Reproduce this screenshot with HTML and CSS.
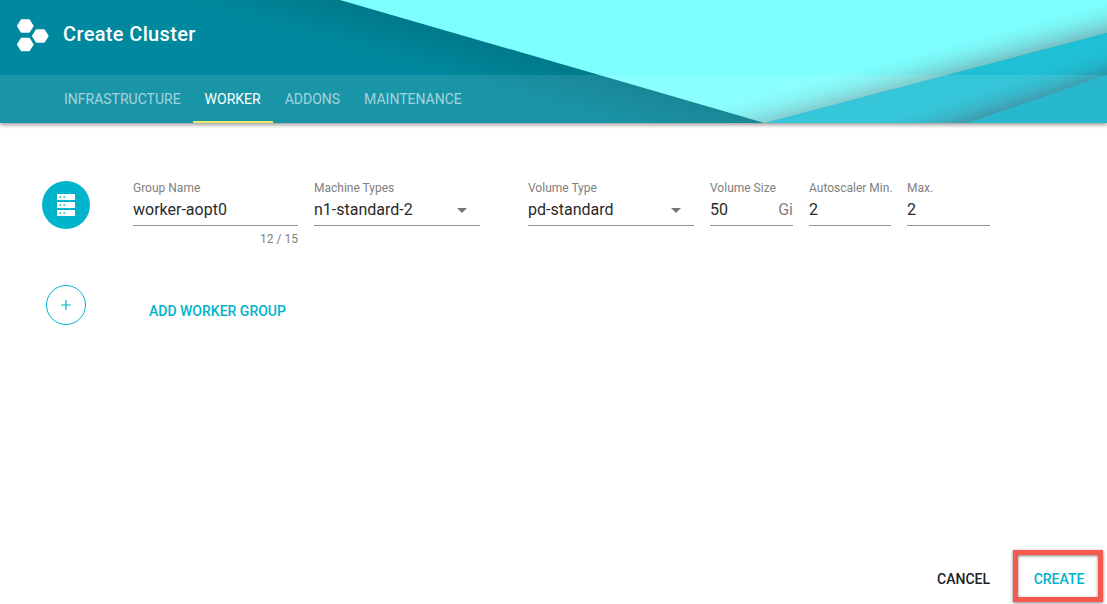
FILE: index.html
```html
<!DOCTYPE html>
<html lang="en">
<head>
    <meta charset="UTF-8">
    <title>Create Cluster</title>
    <link rel="stylesheet" href="styles.css">
</head>
<body>

    <header class="header">
        <!-- Angled background shapes -->
        <svg class="header-bg" width="1107" height="123" viewBox="0 0 1107 123">
            <defs>
                <linearGradient id="darkShade" gradientUnits="userSpaceOnUse" x1="600" y1="75" x2="588" y2="117">
                    <stop offset="0" stop-color="#00606c" stop-opacity="0.38"/>
                    <stop offset="1" stop-color="#00606c" stop-opacity="0"/>
                </linearGradient>
                <linearGradient id="lightShade" gradientUnits="userSpaceOnUse" x1="930" y1="80" x2="921" y2="47">
                    <stop offset="0" stop-color="#6f9a9e" stop-opacity="0.6"/>
                    <stop offset="1" stop-color="#7dffff" stop-opacity="0"/>
                </linearGradient>
                <linearGradient id="midShade" gradientUnits="userSpaceOnUse" x1="1040" y1="98" x2="1031" y2="70">
                    <stop offset="0" stop-color="#2f7484" stop-opacity="0.6"/>
                    <stop offset="1" stop-color="#1fc0d6" stop-opacity="0"/>
                </linearGradient>
            </defs>
            <rect width="1107" height="123" fill="#00899e"/>
            <polygon points="340,0 765,123 0,123 0,0" fill="url(#darkShade)"/>
            <polygon points="340,0 1107,0 1107,33 765,123" fill="#7dffff"/>
            <polygon points="340,0 1107,0 1107,33 765,123" fill="url(#lightShade)"/>
            <polygon points="1107,33 1107,123 765,123" fill="#1fc0d6"/>
            <polygon points="1107,33 1107,75 968,123 765,123" fill="url(#midShade)"/>
            <polygon points="1107,75 1107,123 968,123" fill="#0fb0c8"/>
        </svg>

        <div class="title-bar">
            <svg class="logo" width="32" height="34" viewBox="0 0 32 34">
                <g fill="#fff" stroke="#fff" stroke-width="2" stroke-linejoin="round">
                    <polygon points="1,7 4.6,1.2 12,1.2 15.6,7 12,12.8 4.6,12.8"/>
                    <polygon points="16,17 19.6,11.2 27,11.2 30.6,17 27,22.8 19.6,22.8"/>
                    <polygon points="1,25.5 4.6,19.7 12,19.7 15.6,25.5 12,31.3 4.6,31.3"/>
                </g>
            </svg>
            <h1 class="page-title">Create Cluster</h1>
        </div>

        <nav class="tabs">
            <a class="tab" href="#">INFRASTRUCTURE</a>
            <a class="tab tab-active" href="#">WORKER</a>
            <a class="tab" href="#">ADDONS</a>
            <a class="tab" href="#">MAINTENANCE</a>
        </nav>
    </header>

    <main class="content">
        <div class="worker-row">
            <div class="worker-icon">
                <svg width="18" height="22" viewBox="0 0 18 22">
                    <path fill="#fff" fill-rule="evenodd" d="M0 0h18v6H0zM2.5 2.3v1.4H4V2.3zM6.5 2.3v1.4H8V2.3zM0 8h18v6H0zM2.5 10.3v1.4H4v-1.4zM6.5 10.3v1.4H8v-1.4zM0 16h18v6H0zM2.5 18.3v1.4H4v-1.4zM6.5 18.3v1.4H8v-1.4z"/>
                </svg>
            </div>

            <div class="field field-name">
                <label>Group Name</label>
                <div class="field-value">worker-aopt0</div>
                <div class="field-hint">12 / 15</div>
            </div>
            <div class="field field-machine">
                <label>Machine Types</label>
                <div class="field-value">n1-standard-2<span class="arrow"></span></div>
            </div>
            <div class="field field-volume">
                <label>Volume Type</label>
                <div class="field-value">pd-standard<span class="arrow"></span></div>
            </div>
            <div class="field field-size">
                <label>Volume Size</label>
                <div class="field-value">50<span class="suffix">Gi</span></div>
            </div>
            <div class="field field-min">
                <label>Autoscaler Min.</label>
                <div class="field-value">2</div>
            </div>
            <div class="field field-max">
                <label>Max.</label>
                <div class="field-value">2</div>
            </div>
        </div>

        <div class="add-row">
            <div class="add-icon">
                <svg width="12" height="12" viewBox="0 0 12 12">
                    <path d="M6 1v10M1 6h10" stroke="#00b4cc" stroke-width="1.2" fill="none"/>
                </svg>
            </div>
            <a class="add-link" href="#">ADD WORKER GROUP</a>
        </div>
    </main>

    <footer class="actions">
        <button class="btn btn-cancel" type="button">CANCEL</button>
        <button class="btn btn-create" type="button">CREATE</button>
    </footer>

</body>
</html>
```

FILE: styles.css
```css
body {
    margin: 0;
    height: 604px;
    overflow: hidden;
    background-color: #fff;
    font-family: Roboto, sans-serif;
    display: flex;
    flex-direction: column;
}

/* Header */
.header { position: relative; height: 123px; box-shadow: 0 2px 4px rgba(0,0,0,0.4); }
.header-bg { position: absolute; left: 0; top: 0; }
.title-bar { position: relative; height: 75px; display: flex; align-items: center; padding: 0 0 7px 17px; box-sizing: border-box; }
.logo { margin-top: 4px; }
.page-title { margin: 0 0 0 14px; color: #fff; font-size: 20px; font-weight: 500; letter-spacing: 0.35px; }
.tabs { position: relative; height: 48px; display: flex; padding-left: 52px; background-color: rgba(255,255,255,0.1); }
.tab { padding: 0 12px; line-height: 48px; height: 48px; box-sizing: border-box; font-size: 14px; color: rgba(255,255,255,0.6); text-decoration: none; }
.tab-active { color: #fff; border-bottom: 2px solid #e6e96a; }

/* Worker form */
.content { flex: 1; }
.worker-row { display: flex; padding: 58px 0 0 42px; }
.worker-icon { width: 48px; height: 48px; border-radius: 50%; background-color: #00b4cc; display: flex; align-items: center; justify-content: center; margin-right: 43px; }
.field { margin-right: 16px; }
.field label { display: block; font-size: 12px; color: #808080; line-height: 14px; white-space: nowrap; }
.field-value { font-size: 16px; color: #2a2a2a; height: 31px; line-height: 29px; border-bottom: 1px solid #949494; box-sizing: border-box; display: flex; }
.field-hint { font-size: 12px; color: #808080; text-align: right; margin-top: 6px; }
.field-name { width: 165px; }
.field-machine { width: 166px; margin-right: 48px; }
.field-volume { width: 166px; }
.field-size { width: 83px; }
.field-min { width: 82px; }
.field-max { width: 83px; }
.arrow { margin-left: auto; margin-right: 13px; margin-top: 13px; width: 0; height: 0; border-left: 5px solid transparent; border-right: 5px solid transparent; border-top: 5px solid #757575; }
.suffix { margin-left: auto; color: #808080; }

.add-row { display: flex; align-items: center; padding: 39px 0 0 46px; }
.add-icon { width: 38px; height: 38px; border: 1px solid #00b4cc; border-radius: 50%; display: flex; align-items: center; justify-content: center; }
.add-link { margin-left: 63px; margin-top: 12px; font-size: 14px; font-weight: 500; color: #00b4cc; text-decoration: none; }

/* Footer buttons */
.actions { display: flex; justify-content: flex-end; align-items: flex-end; height: 59px; padding: 0 4px 2px 0; box-sizing: border-box; }
.btn { background: none; border: none; font-family: Roboto, sans-serif; font-size: 14px; font-weight: 500; color: #212121; padding: 0; }
.btn-cancel { margin-bottom: 15px; }
.btn-create { color: #00b4cc; width: 90px; height: 52px; margin-left: 23px; padding: 6px 0 0 2px; border: 5px solid #f5594f; box-sizing: border-box; box-shadow: 0 1px 3px rgba(0,0,0,0.5), inset 0 1px 3px rgba(0,0,0,0.5); }
```
